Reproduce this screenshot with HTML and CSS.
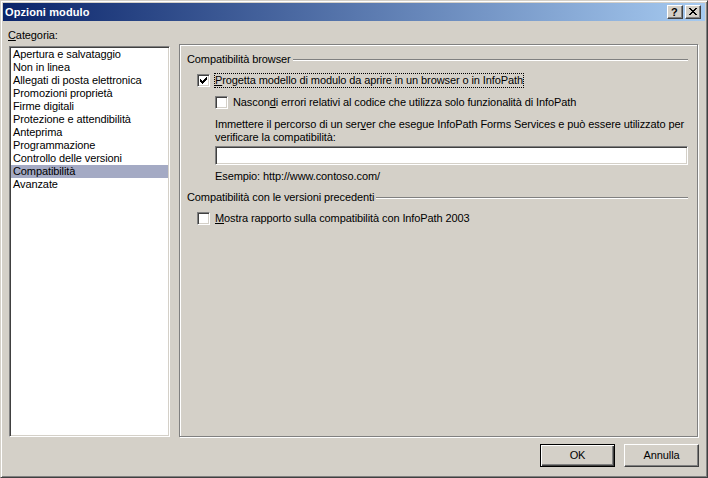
FILE: index.html
```html
<!DOCTYPE html>
<html lang="it">
<head>
<meta charset="utf-8">
<title>Opzioni modulo</title>
<link rel="stylesheet" href="styles.css">
</head>
<body>
<div class="window">
  <div class="titlebar">
    <span class="title">Opzioni modulo</span>
    <div class="caption-buttons">
      <span class="cap-btn help">?</span>
      <span class="cap-btn close">
        <svg width="8" height="7" viewBox="0 0 8 7" shape-rendering="crispEdges"><path d="M0 0h2v1H0zM6 0h2v1H6zM1 1h2v1H1zM5 1h2v1H5zM2 2h4v1H2zM3 3h2v1H3zM2 4h4v1H2zM1 5h2v1H1zM5 5h2v1H5zM0 6h2v1H0zM6 6h2v1H6z" fill="#000"/></svg>
      </span>
    </div>
  </div>
  <div class="main">
    <div class="sidebar">
      <div class="label"><u>C</u>ategoria:</div>
      <ul class="listbox">
        <li>Apertura e salvataggio</li>
        <li>Non in linea</li>
        <li>Allegati di posta elettronica</li>
        <li>Promozioni proprietà</li>
        <li>Firme digitali</li>
        <li>Protezione e attendibilità</li>
        <li>Anteprima</li>
        <li>Programmazione</li>
        <li>Controllo delle versioni</li>
        <li class="selected">Compatibilità</li>
        <li>Avanzate</li>
      </ul>
    </div>
    <div class="panel">
      <div class="group-head"><span>Compatibilità browser</span><span class="rule"></span></div>
      <div class="check-row row-first">
        <span class="cb"><svg width="7" height="7" viewBox="0 0 7 7" shape-rendering="crispEdges"><path d="M0 2h1v3H0zM1 3h1v3H1zM2 4h1v3H2zM3 3h1v3H3zM4 2h1v3H4zM5 1h1v3H5zM6 0h1v3H6z" fill="#000"/></svg></span>
        <span class="cb-label focus"><u>P</u>rogetta modello di modulo da aprire in un browser o in InfoPath</span>
      </div>
      <div class="check-row row-sub">
        <span class="cb"></span>
        <span class="cb-label">Nascon<u>d</u>i errori relativi al codice che utilizza solo funzionalità di InfoPath</span>
      </div>
      <p class="hint">Immettere il percorso di un ser<u>v</u>er che esegue InfoPath Forms Services e può essere utilizzato per<br>verificare la compatibilità:</p>
      <div class="textbox"></div>
      <p class="example">Esempio: http://www.contoso.com/</p>
      <div class="group-head group-second"><span>Compatibilità con le versioni precedenti</span><span class="rule"></span></div>
      <div class="check-row row-last">
        <span class="cb"></span>
        <span class="cb-label"><u>M</u>ostra rapporto sulla compatibilità con InfoPath 2003</span>
      </div>
    </div>
  </div>
  <div class="footer">
    <button class="btn default" type="button">OK</button>
    <button class="btn" type="button">Annulla</button>
  </div>
</div>
</body>
</html>
```

FILE: styles.css
```css
html, body {
  margin: 0;
  padding: 0;
}

body {
  background: #d4d0c8;
  font-family: "Liberation Sans", Arial, sans-serif;
  font-size: 11px;
  line-height: 13px;
  letter-spacing: -0.1px;
  color: #000;
}

.window {
  box-sizing: border-box;
  width: 708px;
  height: 478px;
  background: #d4d0c8;
  border: 1px solid;
  border-color: #d4d0c8 #404040 #404040 #d4d0c8;
  box-shadow: inset 1px 1px 0 #fff, inset -1px -1px 0 #808080;
  padding: 2px;
  display: flex;
  flex-direction: column;
}

.titlebar {
  height: 18px;
  flex: none;
  display: flex;
  align-items: center;
  padding: 0 4px 0 2px;
  background: linear-gradient(to right, #0a246a, #a6caf0);
  color: #fff;
  font-weight: bold;
  line-height: 18px;
  letter-spacing: 0.1px;
}

.caption-buttons {
  margin-left: auto;
  display: flex;
  gap: 2px;
}

.cap-btn {
  box-sizing: border-box;
  width: 16px;
  height: 14px;
  background: #d4d0c8;
  border: 1px solid;
  border-color: #fff #404040 #404040 #fff;
  box-shadow: inset -1px -1px 0 #808080;
  display: flex;
  align-items: center;
  justify-content: center;
  color: #000;
  font-size: 11px;
  font-weight: bold;
  line-height: 10px;
}

.cap-btn.help {
  padding: 0 1px 1px 0;
}

.cap-btn.close svg {
  display: block;
  margin: 0 1px 1px 0;
}

.main {
  flex: 1;
  display: flex;
  gap: 9px;
  padding: 0 6px;
  min-height: 0;
}

.sidebar {
  width: 161px;
  flex: none;
  display: flex;
  flex-direction: column;
  padding-top: 8px;
}

.label {
  margin-left: -1px;
  height: 13px;
}

.listbox {
  flex: 1;
  margin: 4px 0 0;
  list-style: none;
  background: #fff;
  border: 1px solid;
  border-color: #808080 #fff #fff #808080;
  box-shadow: inset 1px 1px 0 #404040, inset -1px -1px 0 #d4d0c8;
  padding: 1px;
}

.listbox li {
  height: 13px;
  padding-left: 2px;
  white-space: nowrap;
}

.listbox li.selected {
  background: #a4aac4;
}

.panel {
  flex: 1;
  margin-top: 23px;
  margin-right: 1px;
  border: 1px solid #808080;
  box-shadow: inset 1px 1px 0 #fff, 1px 1px 0 #fff;
  padding: 8px 9px 0 7px;
  display: flex;
  flex-direction: column;
  align-items: stretch;
}

.group-head {
  display: flex;
  height: 13px;
  white-space: nowrap;
}

.group-head .rule {
  flex: 1;
  height: 0;
  margin: 6px 0 0 2px;
  border-top: 1px solid #808080;
  border-bottom: 1px solid #fff;
}

.group-second {
  margin-top: 8px;
}

.check-row {
  display: flex;
  align-items: center;
  height: 15px;
  margin-top: 7px;
  margin-left: 10px;
  white-space: nowrap;
}

.check-row.row-sub {
  margin-left: 28px;
}

.cb {
  box-sizing: border-box;
  width: 13px;
  height: 13px;
  flex: none;
  background: #fff;
  border: 1px solid;
  border-color: #808080 #fff #fff #808080;
  box-shadow: inset 1px 1px 0 #404040, inset -1px -1px 0 #d4d0c8;
  padding: 2px;
}

.cb svg {
  display: block;
}

.cb-label {
  margin-left: 4px;
  border: 1px dotted transparent;
  line-height: 13px;
}

.cb-label.focus {
  border-color: #000;
}

.hint {
  margin: 8px 0 0 28px;
  white-space: nowrap;
}

.textbox {
  box-sizing: border-box;
  height: 19px;
  margin: 2px 0 0 28px;
  background: #fff;
  border: 1px solid;
  border-color: #808080 #fff #fff #808080;
  box-shadow: inset 1px 1px 0 #404040, inset -1px -1px 0 #d4d0c8;
}

.example {
  margin: 5px 0 0 28px;
}

.footer {
  flex: none;
  display: flex;
  justify-content: flex-end;
  gap: 9px;
  padding: 7px 6px 8px;
}

.btn {
  box-sizing: border-box;
  width: 75px;
  height: 23px;
  margin: 0;
  padding: 0;
  font: inherit;
  letter-spacing: inherit;
  color: #000;
  background: #d4d0c8;
  border: 1px solid;
  border-color: #fff #404040 #404040 #fff;
  box-shadow: inset -1px -1px 0 #808080;
  border-radius: 0;
}

.btn.default {
  border-color: #000;
  box-shadow: inset 1px 1px 0 #fff, inset -1px -1px 0 #404040, inset -2px -2px 0 #808080;
}
```
